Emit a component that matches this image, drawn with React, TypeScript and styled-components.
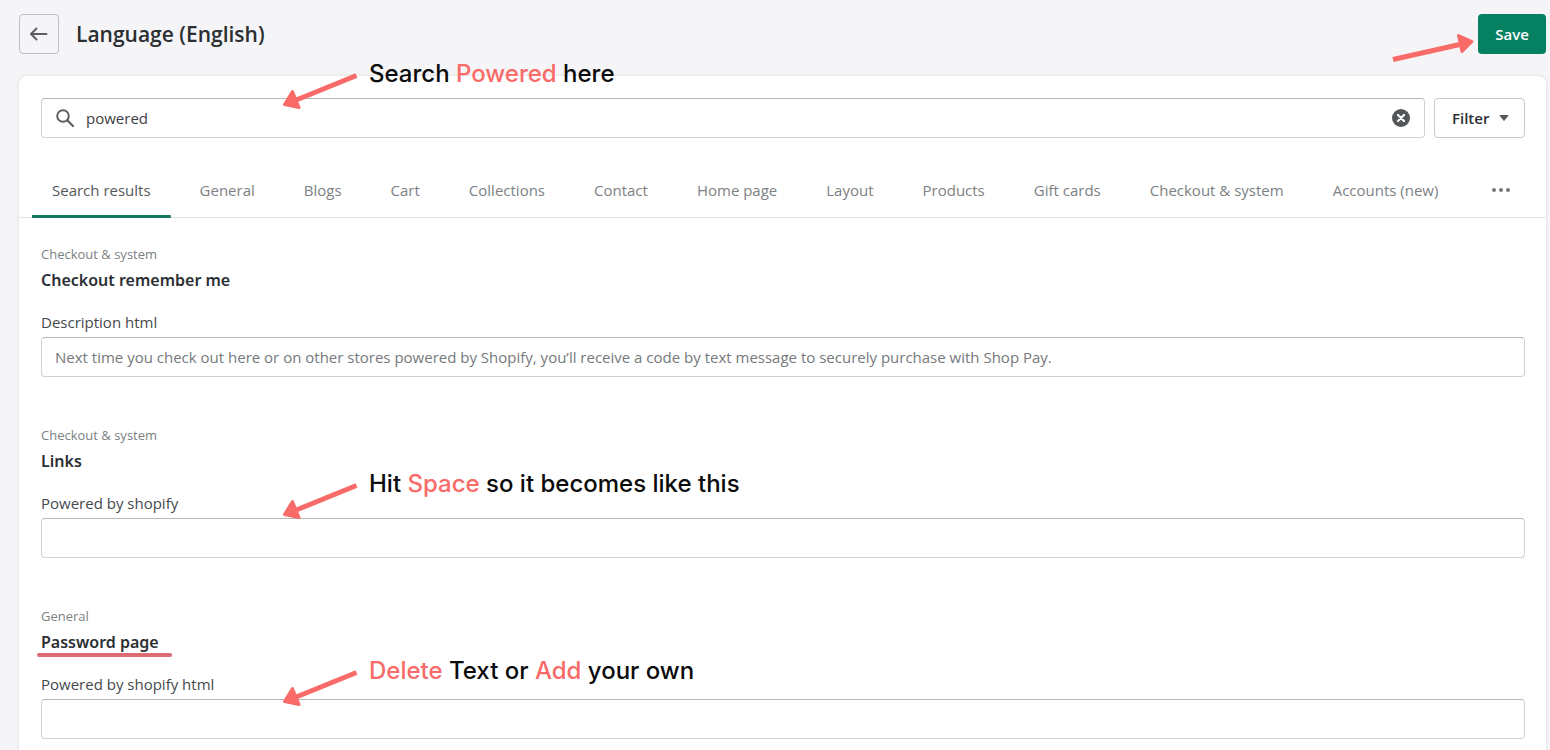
import React from "react";
import styled, { createGlobalStyle } from "styled-components";

const GlobalStyle = createGlobalStyle`
  *, *::before, *::after { box-sizing: border-box; }
  body {
    margin: 0;
    background: #f5f5f7;
    color: #2b2f33;
    font-family: "Open Sans", "Noto Sans", sans-serif;
    font-size: 15px;
    line-height: 20px;
  }
  button, input { font: inherit; color: inherit; }
  h1, h2, p { margin: 0; }
`;

const coral = "#f96b68";

const Page = styled.div`
  display: flex;
  flex-direction: column;
  min-height: 100vh;
  padding: 14px 4px 0 19px;
`;

const Header = styled.header`
  display: flex;
  align-items: center;
  gap: 17px;
  margin-bottom: 22px;
`;

const BackButton = styled.button`
  display: grid;
  place-items: center;
  width: 40px;
  height: 40px;
  padding: 0;
  border: 1px solid #babec3;
  border-radius: 4px;
  background: transparent;
  color: #5c5f62;
`;

const Title = styled.h1`
  flex: 1;
  font-size: 21px;
  line-height: 28px;
  font-weight: 600;
`;

const SaveArea = styled.div`
  position: relative;
`;

const SaveButton = styled.button`
  height: 40px;
  width: 68px;
  padding: 0;
  border: 0;
  border-radius: 4px;
  background: #058060;
  color: #fff;
  font-weight: 600;
`;

const SaveArrow = styled.svg`
  position: absolute;
  right: 100%;
  top: 16px;
  overflow: visible;
`;

const Card = styled.main`
  flex: 1;
  padding-bottom: 10px;
  border-radius: 8px 8px 0 0;
  background: #fff;
  box-shadow: 0 0 3px rgba(23, 24, 24, 0.14);
`;

const SearchRow = styled.div`
  display: flex;
  gap: 9px;
  padding: 22px 21px 0 22px;
`;

const Field = styled.div`
  position: relative;
  display: flex;
  flex: 1;
`;

const TextInput = styled.input<{ $search?: boolean }>`
  width: 100%;
  height: 40px;
  padding: 0 ${(p) => (p.$search ? "44px" : "13px")};
  border: 1px solid #cfd2d5;
  border-top-color: #b4b8bb;
  border-radius: 4px;
  background: #fff;
  color: ${(p) => (p.$search ? "#3c4043" : "#75797c")};
  outline: 0;
`;

const SearchIcon = styled.svg`
  position: absolute;
  left: 14px;
  top: 10px;
`;

const ClearButton = styled.button`
  position: absolute;
  right: 14px;
  top: 10px;
  display: grid;
  width: 20px;
  height: 20px;
  padding: 0;
  border: 0;
  background: none;
`;

const FilterButton = styled.button`
  display: flex;
  align-items: center;
  justify-content: space-between;
  width: 91px;
  height: 40px;
  padding: 0 15px 0 17px;
  border: 1px solid #c6c9cc;
  border-radius: 4px;
  background: #fff;
  font-weight: 600;
`;

const Tabs = styled.nav`
  display: flex;
  gap: 9px;
  margin-top: 24px;
  padding: 0 24px 0 13px;
  border-bottom: 1px solid #e1e3e5;
`;

const Tab = styled.button<{ $active?: boolean }>`
  height: 56px;
  padding: 0 20px;
  margin-bottom: -1px;
  border: 0;
  background: ${(p) =>
    p.$active
      ? "linear-gradient(#137a5f, #137a5f) bottom / 100% 3px no-repeat"
      : "none"};
  border-radius: 3px 3px 0 0;
  color: ${(p) => (p.$active ? "#54585b" : "#7d8184")};
  white-space: nowrap;
`;

const MoreButton = styled(Tab)`
  display: grid;
  place-items: center;
  margin-left: auto;
  padding: 0 12px;
`;

const Sections = styled.div`
  display: flex;
  flex-direction: column;
  gap: 48px;
  padding: 26px 21px 0 22px;
`;

const Category = styled.p`
  margin-bottom: 4px;
  color: #7b7f82;
  font-size: 13px;
`;

const Heading = styled.h2`
  margin-bottom: 20px;
  font-family: "Noto Sans", sans-serif;
  font-size: 16px;
  line-height: 24px;
  font-weight: 600;
`;

const Marked = styled.span`
  position: relative;
  &::after {
    content: "";
    position: absolute;
    left: -4px;
    right: -13px;
    bottom: -4px;
    height: 4px;
    border-radius: 2px;
    background: #dc6b72;
  }
`;

const Label = styled.label`
  display: block;
  margin-bottom: 5px;
  color: #45494c;
`;

const Callout = styled.div<{ $top: number }>`
  position: absolute;
  left: 241px;
  top: ${(p) => p.$top}px;
  display: flex;
  gap: 11px;
  pointer-events: none;
`;

const CalloutText = styled.p`
  color: #0b0b0b;
  font-family: Inter, sans-serif;
  font-size: 24px;
  line-height: 28px;
  font-weight: 500;
  white-space: nowrap;
  em {
    color: ${coral};
    font-style: normal;
  }
`;

function Note({ top, children }: { top: number; children: React.ReactNode }) {
  return (
    <Callout $top={top}>
      <svg width="76" height="50" viewBox="0 0 76 50" aria-hidden="true">
        <path d="M74.500 15.500 13 40.500" stroke={coral} strokeWidth="5" />
        <path
          d="M2.500 44.500 10.500 31.500 17 47.500Z"
          fill={coral}
          stroke={coral}
          strokeWidth="3"
          strokeLinejoin="round"
        />
      </svg>
      <CalloutText>{children}</CalloutText>
    </Callout>
  );
}

const tabs = [
  "Search results",
  "General",
  "Blogs",
  "Cart",
  "Collections",
  "Contact",
  "Home page",
  "Layout",
  "Products",
  "Gift cards",
  "Checkout & system",
  "Accounts (new)",
];

interface SectionData {
  id: string;
  category: string;
  title: string;
  marked?: boolean;
  label: string;
  value: string;
  note?: React.ReactNode;
  noteTop?: number;
}

const sections: SectionData[] = [
  {
    id: "remember",
    category: "Checkout & system",
    title: "Checkout remember me",
    label: "Description html",
    value:
      "Next time you check out here or on other stores powered by Shopify, you’ll receive a code by text message to securely purchase with Shop Pay.",
  },
  {
    id: "links",
    category: "Checkout & system",
    title: "Links",
    label: "Powered by shopify",
    value: " ",
    noteTop: -48,
    note: (
      <>
        Hit <em>Space</em> so it becomes like this
      </>
    ),
  },
  {
    id: "password",
    category: "General",
    title: "Password page",
    marked: true,
    label: "Powered by shopify html",
    value: "",
    noteTop: -42,
    note: (
      <>
        <em>Delete</em> Text or <em>Add</em> your own
      </>
    ),
  },
];

export default function App() {
  return (
    <>
      <GlobalStyle />
      <Page>
        <Header>
          <BackButton aria-label="Back">
            <svg width="20" height="20" viewBox="0 0 20 20" fill="none" stroke="currentColor" strokeWidth="2" strokeLinecap="round" strokeLinejoin="round">
              <path d="M17.500 10H2.500M7.500 4.500 2 10 7.500 15.500" />
            </svg>
          </BackButton>
          <Title>Language (English)</Title>
          <SaveArea>
            <SaveArrow width="88" height="48" viewBox="0 0 88 48" aria-hidden="true">
              <path d="M3 29.500 72 14" stroke={coral} strokeWidth="5" />
              <path d="M68.500 5.500 82 11.500 72 21.500Z" fill={coral} stroke={coral} strokeWidth="3" strokeLinejoin="round" />
            </SaveArrow>
            <SaveButton>Save</SaveButton>
          </SaveArea>
        </Header>
        <Card>
          <SearchRow>
            <Field>
              <TextInput $search aria-label="Search" defaultValue="powered" />
              <SearchIcon width="20" height="20" viewBox="0 0 20 20" fill="none" stroke="#5c5f62" aria-hidden="true">
                <circle cx="8" cy="8" r="5.800" strokeWidth="2" />
                <path d="m12.500 12.500 5.500 5.500" strokeWidth="2.200" strokeLinecap="round" />
              </SearchIcon>
              <ClearButton aria-label="Clear search">
                <svg width="20" height="20" viewBox="0 0 20 20">
                  <circle cx="10" cy="10" r="9" fill="#54575a" />
                  <path d="m7 7 6 6m0-6-6 6" stroke="#fff" strokeWidth="2.200" strokeLinecap="round" />
                </svg>
              </ClearButton>
              <Note top={-38}>
                Search <em>Powered</em> here
              </Note>
            </Field>
            <FilterButton>
              Filter
              <svg width="10" height="6" viewBox="0 0 10 6" aria-hidden="true">
                <path d="M1 0.500h8L5 5.500Z" fill="#55585b" stroke="#55585b" strokeLinejoin="round" />
              </svg>
            </FilterButton>
          </SearchRow>
          <Tabs>
            {tabs.map((name, i) => (
              <Tab key={name} $active={i === 0}>
                {name}
              </Tab>
            ))}
            <MoreButton aria-label="More tabs">
              <svg width="18" height="4" viewBox="0 0 18 4" fill="#75797c">
                <circle cx="2" cy="2" r="2" />
                <circle cx="9" cy="2" r="2" />
                <circle cx="16" cy="2" r="2" />
              </svg>
            </MoreButton>
          </Tabs>
          <Sections>
            {sections.map((s) => (
              <section key={s.id}>
                <Category>{s.category}</Category>
                <Heading>{s.marked ? <Marked>{s.title}</Marked> : s.title}</Heading>
                <Label htmlFor={s.id}>{s.label}</Label>
                <Field>
                  <TextInput id={s.id} defaultValue={s.value} />
                  {s.note && <Note top={s.noteTop ?? 0}>{s.note}</Note>}
                </Field>
              </section>
            ))}
          </Sections>
        </Card>
      </Page>
    </>
  );
}
